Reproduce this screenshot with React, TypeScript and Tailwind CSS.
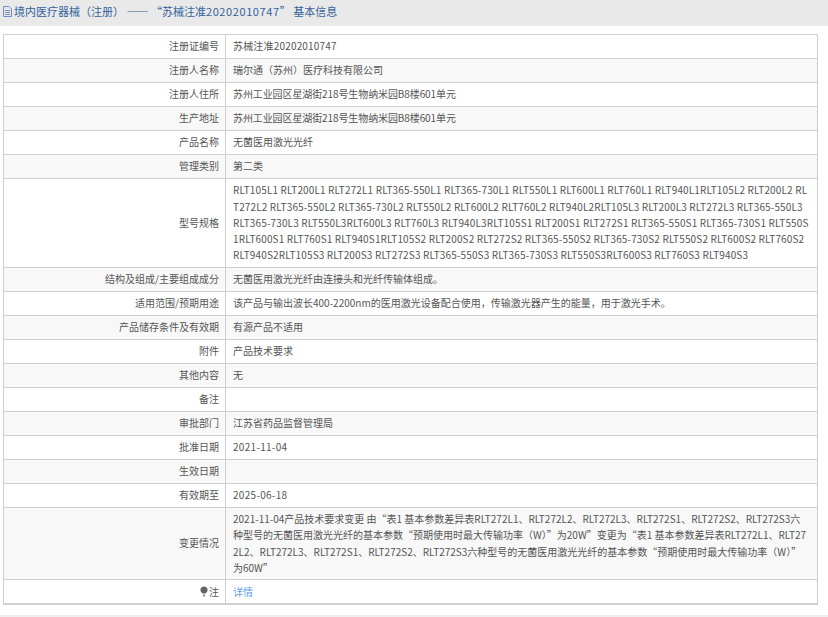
const rows: [string, string, string?][] = [
  ["注册证编号", "苏械注准20202010747", "tracking-[0.18px]"],
  ["注册人名称", "瑞尔通（苏州）医疗科技有限公司"],
  ["注册人住所", "苏州工业园区星湖街218号生物纳米园B8楼601单元", "tracking-[-0.1px]"],
  ["生产地址", "苏州工业园区星湖街218号生物纳米园B8楼601单元", "tracking-[-0.1px]"],
  ["产品名称", "无菌医用激光光纤"],
  ["管理类别", "第二类"],
  [
    "型号规格",
    "RLT105L1 RLT200L1 RLT272L1 RLT365-550L1 RLT365-730L1 RLT550L1 RLT600L1 RLT760L1 RLT940L1RLT105L2 RLT200L2 RLT272L2 RLT365-550L2 RLT365-730L2 RLT550L2 RLT600L2 RLT760L2 RLT940L2RLT105L3 RLT200L3 RLT272L3 RLT365-550L3 RLT365-730L3 RLT550L3RLT600L3 RLT760L3 RLT940L3RLT105S1 RLT200S1 RLT272S1 RLT365-550S1 RLT365-730S1 RLT550S1RLT600S1 RLT760S1 RLT940S1RLT105S2 RLT200S2 RLT272S2 RLT365-550S2 RLT365-730S2 RLT550S2 RLT600S2 RLT760S2 RLT940S2RLT105S3 RLT200S3 RLT272S3 RLT365-550S3 RLT365-730S3 RLT550S3RLT600S3 RLT760S3 RLT940S3",
    "tracking-[0.14px]",
  ],
  ["结构及组成/主要组成成分", "无菌医用激光光纤由连接头和光纤传输体组成。"],
  ["适用范围/预期用途", "该产品与输出波长400-2200nm的医用激光设备配合使用，传输激光器产生的能量，用于激光手术。"],
  ["产品储存条件及有效期", "有源产品不适用"],
  ["附件", "产品技术要求"],
  ["其他内容", "无"],
  ["备注", ""],
  ["审批部门", "江苏省药品监督管理局"],
  ["批准日期", "2021-11-04", "tracking-[0.3px]"],
  ["生效日期", ""],
  ["有效期至", "2025-06-18", "tracking-[0.3px]"],
  [
    "变更情况",
    "2021-11-04产品技术要求变更 由“表1 基本参数差异表RLT272L1、RLT272L2、RLT272L3、RLT272S1、RLT272S2、RLT272S3六种型号的无菌医用激光光纤的基本参数“预期使用时最大传输功率（W）”为20W”变更为“表1 基本参数差异表RLT272L1、RLT272L2、RLT272L3、RLT272S1、RLT272S2、RLT272S3六种型号的无菌医用激光光纤的基本参数“预期使用时最大传输功率（W）”为60W”",
  ],
];

function DocIcon() {
  return (
    <svg width="9" height="11" viewBox="0 0 9 11" fill="none" stroke="#6f8fc4" strokeWidth="1" className="shrink-0">
      <path d="M0.5 0.5H6L8.5 3V10.5H0.5Z" />
      <path d="M2 4.5H7M2 6.5H7M2 8.5H7" />
    </svg>
  );
}

function BulbIcon() {
  return (
    <svg width="8" height="11" viewBox="0 0 8 11" className="inline-block mr-px align-[-1px]">
      <path d="M4 0.5C6 0.5 7.6 2 7.6 4C7.6 5.5 6.6 6.3 5.4 7.5H2.6C1.4 6.3 0.4 5.5 0.4 4C0.4 2 2 0.5 4 0.5Z" fill="#5f6468" />
      <path d="M3 8.4H5V10.4H3Z" fill="#8a8e92" />
    </svg>
  );
}

export default function App() {
  return (
    <div lang="zh-CN" className="w-[828px] h-[617px] overflow-hidden bg-white font-['Noto_Sans_CJK_SC','Noto_Sans',sans-serif] text-[10px] text-[#555]">
      {/* title */}
      <div className="h-[26px] bg-[#e9e9e9] pl-[3px] pb-[3px] flex items-center gap-[2px] text-[11px] text-[#33639c]">
        <DocIcon />
        <span>
          境内医疗器械（注册） —— “苏械注准<span className="tracking-[0.6px]">20202010747</span>” 基本信息
        </span>
      </div>

      <div className="pt-[8px] pl-[3px] w-[820px]">
        <table className="w-[815px] table-fixed border-collapse border border-[#cfcfcf] border-b-[2px]">
          <tbody>
            {rows.map(([label, value, extra], i) => (
              <tr key={label} className={i % 2 == 1 ? "bg-[#f8f8f8]" : "bg-white"}>
                <td className="w-[222px] h-[24px] border border-[#cfcfcf] pr-[6px] text-right leading-[16.2px]">{label}</td>
                <td className={"border border-[#cfcfcf] pl-[7px] pr-[8px] py-[3.4px] leading-[16.2px] break-all " + (extra ?? "")}>
                  {value}
                </td>
              </tr>
            ))}
            <tr>
              <td className="h-[24px] border border-[#cfcfcf] pr-[6px] text-right leading-[16.2px]">
                <BulbIcon />注
              </td>
              <td className="border border-[#cfcfcf] pl-[7px] py-[3.4px] leading-[16.2px] text-[#5c9bf0]">详情</td>
            </tr>
          </tbody>
        </table>
      </div>
      <div className="mt-[10px] h-[2px] bg-[#efefef]" />
    </div>
  );
}
